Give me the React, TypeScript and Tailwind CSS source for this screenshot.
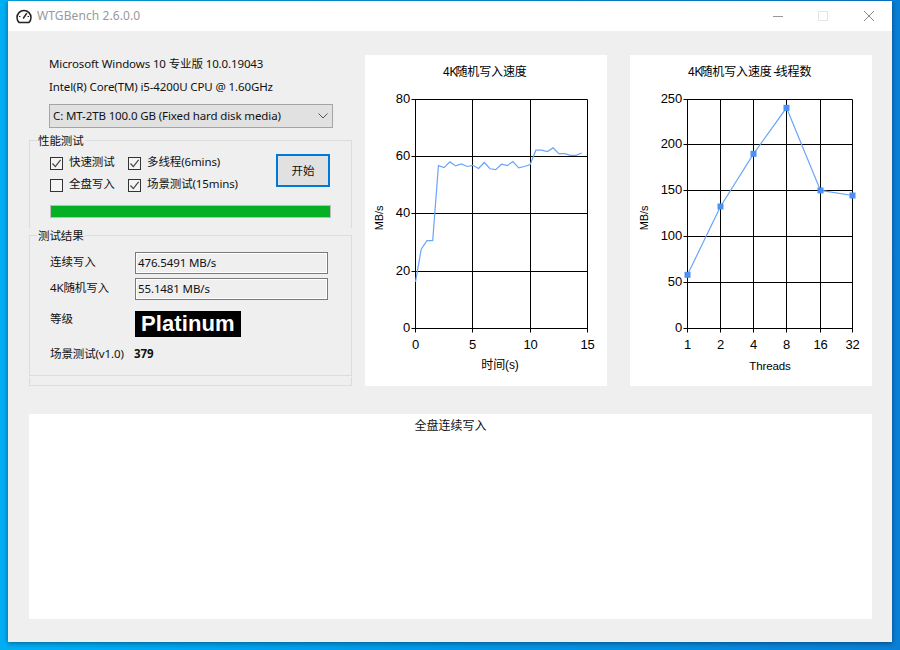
import React from 'react';

const speed = [16.3, 27.7, 30.7, 30.7, 56.9, 56.2, 58.2, 56.8, 57.5, 56.6, 57, 55.9, 58, 55.8, 55.5, 57.4, 56.9, 58.3, 56.1, 56.6, 57.3, 62.3, 62.3, 61.8, 63.1, 61.1, 61.1, 60.5, 60.5, 61.3];
const threads = [58.6, 133.2, 190.7, 240.9, 150.7, 145.2];
const threadLabels = ['1', '2', '4', '8', '16', '32'];

const Check = ({ on, label }: { on: boolean; label: string }) => (
  <div className="flex items-center h-[13px] gap-[6px]">
    <div className="w-[13px] h-[13px] border border-[#333] bg-[#f4f4f4] flex-none">
      {on && (
        <svg viewBox="0 0 11 11" className="w-[11px] h-[11px]">
          <path d="M1.5 5.5 L4.3 8.6 L9.6 1.8" fill="none" stroke="#444" strokeWidth="1.2" />
        </svg>
      )}
    </div>
    <span className="whitespace-nowrap mb-[4px]">{label}</span>
  </div>
);

const Field = ({ label, value }: { label: string; value: string }) => (
  <div className="flex items-center h-[22px]">
    <span className="w-[85px] mb-[2px]">{label}</span>
    <div className="w-[193px] h-[22px] border border-[#7a7a7a] flex items-center">
      <div className="w-full h-full border border-white flex items-center pl-[1px]">{value}</div>
    </div>
  </div>
);

// plot coords are relative to the chart panel (242x331)
const Plot = ({ xs, ys, children }: { xs: number[]; ys: number[]; children: React.ReactNode }) => (
  <g>
    {xs.map((x) => (
      <line key={x} x1={x} x2={x} y1={ys[0]} y2={ys[ys.length - 1] + 4} stroke="#000" strokeWidth="1" />
    ))}
    {ys.map((y) => (
      <line key={y} x1={xs[0] - 4} x2={xs[xs.length - 1]} y1={y} y2={y} stroke="#000" strokeWidth="1" />
    ))}
    {children}
  </g>
);

const SpeedChart = () => {
  const xs = [50.5, 107.5, 165.5, 222.5];
  const ys = [44.5, 101.5, 158.5, 216.5, 273.5];
  const pts = speed.map((v, i) => `${50.5 + (i * 0.5 * 172) / 15},${273.5 - (v * 229) / 80}`).join(' ');
  return (
    <svg viewBox="0 0 242 331" className="w-[242px] h-[331px] bg-white flex-none font-['Liberation_Sans','Noto_Sans_CJK_SC',sans-serif]">
      <text x="78" y="21" fontSize="12">4K<tspan dx="-2">随机写入速度</tspan></text>
      <Plot xs={xs} ys={ys}>
        <polyline points={pts} fill="none" stroke="#6aa5f8" strokeWidth="1.2" />
      </Plot>
      {['80', '60', '40', '20', '0'].map((t, i) => (
        <text key={t} x="45" y={ys[i] + 3.5} fontSize="13" textAnchor="end">{t}</text>
      ))}
      {['0', '5', '10', '15'].map((t, i) => (
        <text key={t} x={xs[i]} y="294" fontSize="13" textAnchor="middle">{t}</text>
      ))}
      <text x="135" y="314" fontSize="12" textAnchor="middle">时间(s)</text>
      <text transform="translate(18 163) rotate(-90)" fontSize="11" textAnchor="middle">MB/s</text>
    </svg>
  );
};

const ThreadChart = () => {
  const xs = [57.5, 90.5, 123.5, 156.5, 190.5, 222.5];
  const ys = [44.5, 89.5, 135.5, 181.5, 227.5, 273.5];
  const pts = threads.map((v, i) => [xs[i], 273.5 - (v * 229) / 250]);
  return (
    <svg viewBox="0 0 242 331" className="w-[242px] h-[331px] bg-white flex-none font-['Liberation_Sans','Noto_Sans_CJK_SC',sans-serif]">
      <text x="58" y="21" fontSize="12">4K<tspan dx="-2">随机写入速度</tspan><tspan dx="1.5">-</tspan><tspan dx="-1.5">线程数</tspan></text>
      <Plot xs={xs} ys={ys}>
        <polyline points={pts.map((p) => p.join(',')).join(' ')} fill="none" stroke="#6aa5f8" strokeWidth="1.2" />
        {pts.map((p) => (
          <rect key={p[0]} x={p[0] - 3} y={p[1] - 3} width="6" height="6" fill="#4a90f5" />
        ))}
      </Plot>
      {['250', '200', '150', '100', '50', '0'].map((t, i) => (
        <text key={t} x="52" y={ys[i] + 3.5} fontSize="13" textAnchor="end">{t}</text>
      ))}
      {threadLabels.map((t, i) => (
        <text key={t} x={xs[i]} y="294" fontSize="13" textAnchor="middle">{t}</text>
      ))}
      <text x="140" y="315" fontSize="11.5" textAnchor="middle">Threads</text>
      <text transform="translate(18 163) rotate(-90)" fontSize="11" textAnchor="middle">MB/s</text>
    </svg>
  );
};

export default function App() {
  return (
    <div className="w-[900px] h-[650px] pt-px pl-2 overflow-hidden bg-gradient-to-r from-[#00aef4] to-[#0a7fd6] font-['Noto_Sans','Noto_Sans_CJK_SC',sans-serif] text-[11.5px] tracking-[-0.12px] leading-4 text-[#111]">
      <div className="w-[884px] h-[641px] bg-[#efefef] shadow-[0_1px_5px_rgba(0,0,0,0.45)] flex flex-col">
        {/* Title bar */}
        <div className="h-[30px] bg-white flex items-center flex-none">
          <svg viewBox="0 0 16 16" className="w-4 h-4 ml-2 flex-none">
            <path d="M3.2 14.6 A7 7 0 1 1 12.8 14.6 Z" fill="none" stroke="#222" strokeWidth="1.5" strokeLinejoin="round" />
            <path d="M7.2 10.5 L10.8 5.2" stroke="#222" strokeWidth="1.5" />
            <path d="M3 8.5 H4.4 M11.6 8.5 H13" stroke="#222" strokeWidth="1" />
          </svg>
          <span className="ml-[5px] text-[#999] text-[12px] tracking-[0.1px]">WTGBench 2.6.0.0</span>
          <div className="ml-auto flex items-center">
            <div className="w-[10px] h-px bg-[#999]" />
            <div className="ml-[35px] w-[10px] h-[10px] border border-[#e5e5e5]" />
            <svg viewBox="0 0 10 10" className="ml-[36px] mr-[18px] w-[10px] h-[10px]">
              <path d="M0 0 L10 10 M10 0 L0 10" stroke="#888" strokeWidth="1" />
            </svg>
          </div>
        </div>

        {/* Body */}
        <div className="flex-1 pl-[21px] pt-[24px]">
          <div className="flex items-start">
            <div className="w-[323px] flex-none">
              <div className="pl-5 mt-px whitespace-nowrap">Microsoft Windows 10 专业版 10.0.19043</div>
              <div className="pl-5 mt-[7px] whitespace-nowrap">Intel(R) Core(TM) i5-4200U CPU @ 1.60GHz</div>
              <div className="ml-5 mt-[9px] w-[284px] h-6 bg-[#e1e1e1] border border-[#a5a5a5] flex items-center justify-between pl-[3px] pr-[4px]">
                <span className="whitespace-nowrap">C: MT-2TB 100.0 GB (Fixed hard disk media)</span>
                <svg viewBox="0 0 10 6" className="w-[10px] h-[6px]">
                  <path d="M0.5 0.5 L5 5 L9.5 0.5" fill="none" stroke="#555" strokeWidth="1" />
                </svg>
              </div>

              {/* 性能测试 */}
              <div className="relative mt-3 h-[246px] border border-[#dcdcdc]">
                <span className="absolute left-[7px] -top-[8px] bg-[#efefef] px-px">性能测试</span>
                <div className="flex pl-5 pt-[13px] h-[51px]">
                  <div className="w-[226px] flex-none pt-[3px] flex flex-col gap-[9px]">
                    <div className="flex">
                      <div className="w-[78px]"><Check on label="快速测试" /></div>
                      <Check on label="多线程(6mins)" />
                    </div>
                    <div className="flex">
                      <div className="w-[78px]"><Check on={false} label="全盘写入" /></div>
                      <Check on label="场景测试(15mins)" />
                    </div>
                  </div>
                  <div className="w-[54px] h-[33px] bg-[#e1e1e1] border-2 border-[#0078d7] flex items-center justify-center">开始</div>
                </div>
                <div className="ml-5 mt-[13px] w-[281px] h-[13px] border border-[#bcbcbc] bg-[#06b025]" />
                <div className="-mx-px mt-[10px] pt-[7px] pb-px bg-[#efefef]">
                  {/* 测试结果 */}
                  <div className="relative h-[141px] border border-[#dcdcdc] pl-5 pt-4">
                    <span className="absolute left-[7px] -top-[8px] bg-[#efefef] px-px">测试结果</span>
                    <Field label="连续写入" value="476.5491 MB/s" />
                    <div className="mt-1">
                      <Field label="4K随机写入" value="55.1481 MB/s" />
                    </div>
                    <div className="flex mt-[11px] h-[26px]">
                      <span className="w-[85px]">等级</span>
                      <div className="w-[106px] h-[26px] bg-black text-white font-['Liberation_Sans'] font-bold text-[22px] tracking-[0.1px] leading-[26px] pl-[6px]">Platinum</div>
                    </div>
                    <div className="flex mt-[9px]">
                      <span className="w-[84px]">场景测试(v1.0)</span>
                      <span className="font-bold">379</span>
                    </div>
                  </div>
                </div>
              </div>
            </div>

            <div className="ml-[13px]"><SpeedChart /></div>
            <div className="ml-[23px]"><ThreadChart /></div>
          </div>

          <div className="mt-[28px] w-[843px] h-[205px] bg-white pt-[4px] text-center text-[12px] tracking-normal">全盘连续写入</div>
        </div>
      </div>
    </div>
  );
}
